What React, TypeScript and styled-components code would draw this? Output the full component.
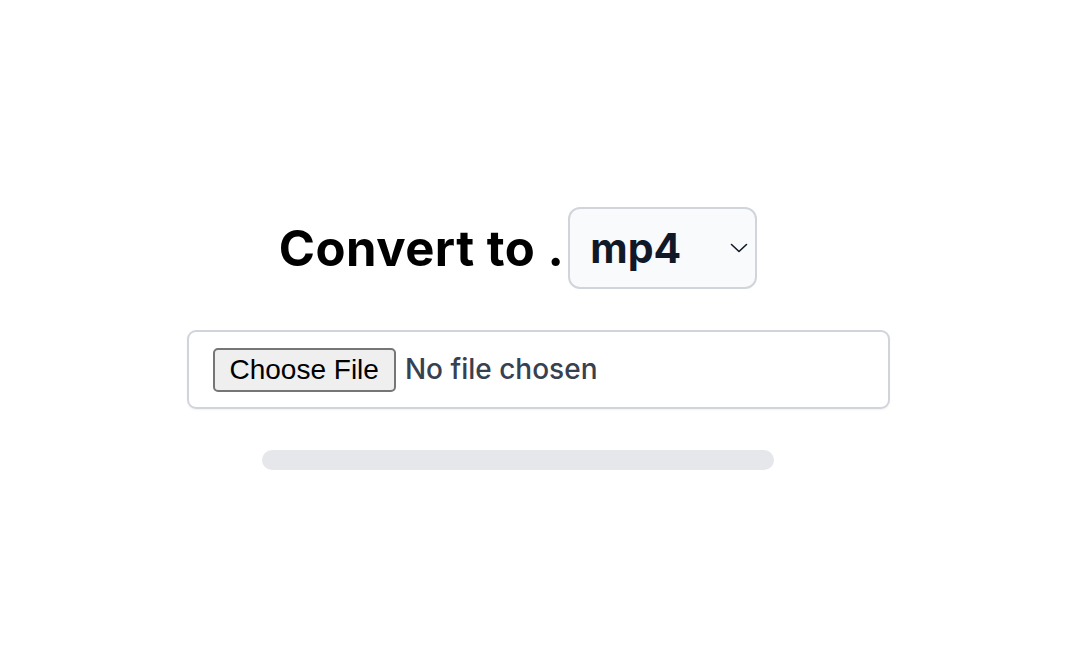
import React from 'react';
import styled, { createGlobalStyle } from 'styled-components';

const GlobalStyle = createGlobalStyle`
  html, body {
    margin: 0;
    padding: 0;
    background: #ffffff;
  }
  body {
    font-family: Inter, "Noto Sans", sans-serif;
  }
`;

export default function App() {
  return (
    <>
      <GlobalStyle />
      <Page>
        <HeadingRow>
          <Heading>Convert to .</Heading>
          <SelectWrap>
            <FormatSelect defaultValue="mp4">
              <option value="mp4">mp4</option>
              <option value="webm">webm</option>
              <option value="mov">mov</option>
              <option value="gif">gif</option>
            </FormatSelect>
            <Chevron width="18" height="10" viewBox="0 0 18 10" fill="none">
              <path d="M1.5 1.5L9 8.5L16.5 1.5" stroke="#111827" strokeWidth="1.6" strokeLinecap="round" strokeLinejoin="round" />
            </Chevron>
          </SelectWrap>
        </HeadingRow>

        <FileBox>
          <FileInput type="file" />
        </FileBox>

        <Track>
          <Fill style={{ width: '0%' }} />
        </Track>
      </Page>
    </>
  );
}

const Page = styled.main`
  width: 1068px;
  height: 656px;
  box-sizing: border-box;
  padding-top: 207px;
  padding-left: 8px;
  display: flex;
  flex-direction: column;
  align-items: center;
`;

const HeadingRow = styled.div`
  display: flex;
  align-items: center;
  margin-right: 40px;
`;

const Heading = styled.h1`
  margin: 0 4px 0 0;
  font-family: Inter, "Noto Sans", sans-serif;
  font-size: 49px;
  font-weight: 700;
  color: #000000;
  letter-spacing: 0.5px;
`;

const SelectWrap = styled.div`
  position: relative;
  display: flex;
`;

const FormatSelect = styled.select`
  appearance: none;
  -webkit-appearance: none;
  width: 189px;
  height: 82px;
  box-sizing: border-box;
  padding: 0 50px 0 20px;
  border: 2px solid #d1d5db;
  border-radius: 12px;
  background: #f9fafb;
  font-family: Inter, "Noto Sans", sans-serif;
  font-size: 41px;
  font-weight: 700;
  color: #111827;
  outline: none;
`;

const Chevron = styled.svg`
  position: absolute;
  right: 9px;
  top: 36px;
  pointer-events: none;
`;

const FileBox = styled.div`
  margin-top: 41px;
  width: 703px;
  height: 79px;
  box-sizing: border-box;
  border: 2px solid #d1d5db;
  border-radius: 9px;
  box-shadow: 0 1px 2px rgba(0, 0, 0, 0.06);
  display: flex;
  align-items: center;
  padding-left: 24px;
`;

const FileInput = styled.input`
  font-family: Inter, "Noto Sans", sans-serif;
  font-size: 28px;
  font-weight: 500;
  color: #374151;

  &::file-selector-button {
    font-family: "Liberation Sans", Arial, sans-serif;
    font-size: 28px;
    font-weight: 400;
    color: #000000;
    background: #efefef;
    border: 2px solid #767676;
    border-radius: 5px;
    height: 44px;
    padding: 0 15px;
    margin-right: 9px;
  }
`;

const Track = styled.div`
  margin-top: 41px;
  margin-right: 40px;
  width: 512px;
  height: 20px;
  border-radius: 10px;
  background: #e5e7eb;
  overflow: hidden;
`;

const Fill = styled.div`
  height: 100%;
  background: #2563eb;
`;
